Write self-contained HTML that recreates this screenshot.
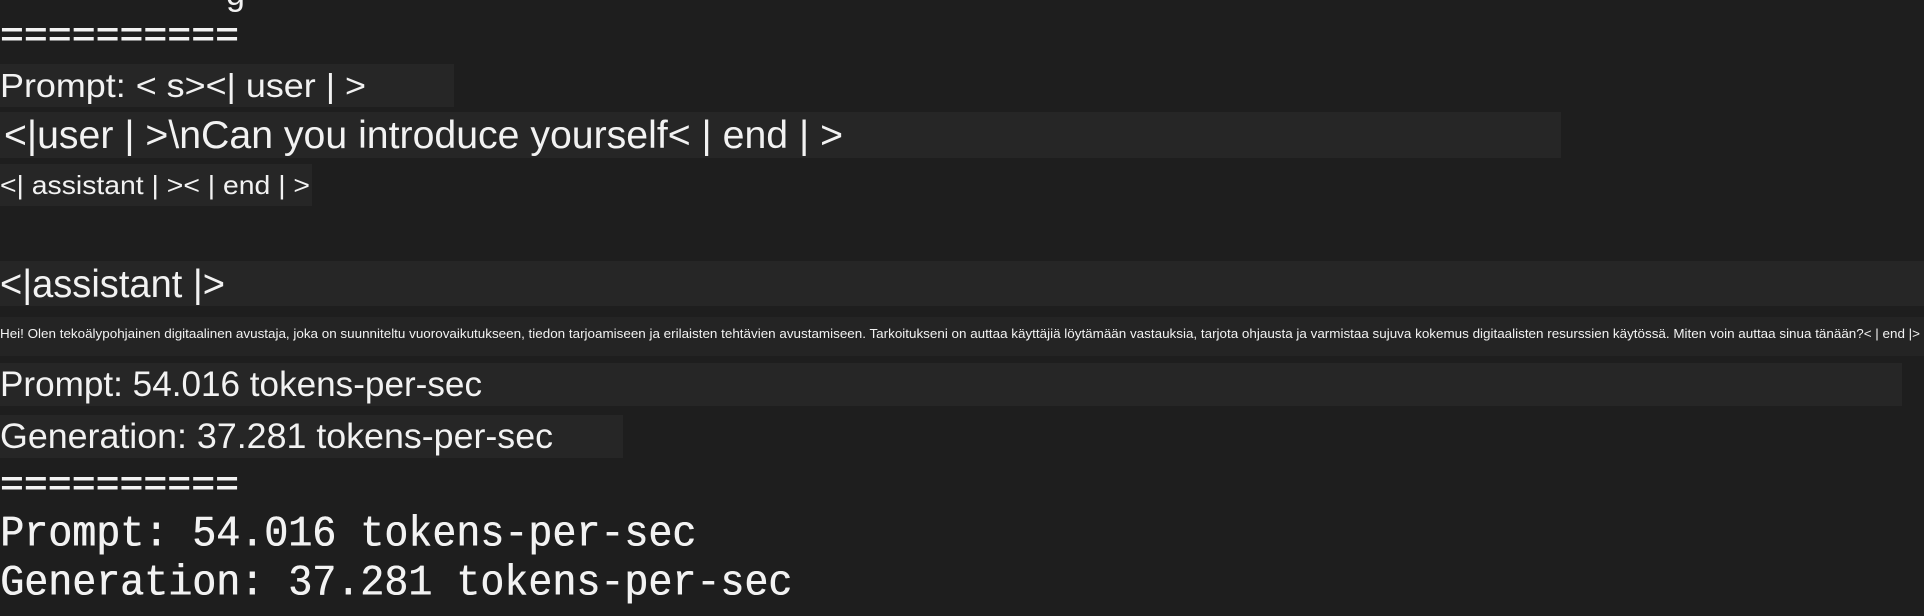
<!DOCTYPE html>
<html><head><meta charset="utf-8"><style>
html,body{margin:0;padding:0;background:#1e1e1e;width:1924px;height:616px;overflow:hidden}
body{position:relative;color:#f2f2f2;font-family:"Liberation Sans","DejaVu Sans",sans-serif}
.b{position:absolute;left:0;background:#262626}
.t{position:absolute;left:0;white-space:nowrap;transform-origin:0 50%;line-height:1}
.m{position:absolute;left:0;white-space:nowrap;font-family:"Liberation Mono","DejaVu Sans Mono",monospace;font-size:40px;line-height:1;text-shadow:0.6px 0 0 #f2f2f2;transform:scaleY(1.08);transform-origin:0 0}
.eq{font-family:"Liberation Mono",monospace;font-weight:bold}
</style></head><body>
<div class="t" style="top:-23px;left:226px;font-size:34px">g</div>
<div class="b" style="top:64px;width:454px;height:43px"></div>
<div class="b" style="top:112px;width:1561px;height:46px"></div>
<div class="b" style="top:164px;width:312px;height:42px"></div>
<div class="b" style="top:261px;width:1924px;height:45px"></div>
<div class="b" style="top:317px;width:1924px;height:39px;background:#242424"></div>
<div class="b" style="top:363px;width:1902px;height:43px"></div>
<div class="b" style="top:415px;width:623px;height:43px"></div>

<div class="t eq" id="e1" style="top:21px;font-size:32px">==========</div>
<div class="t" id="t1" style="top:69px;font-size:33px">Prompt: &lt; s&gt;&lt;| user | &gt;</div>
<div class="t" id="t2" style="top:116px;font-size:39px;left:4px">&lt;|user | &gt;\nCan you introduce yourself&lt; | end | &gt;</div>
<div class="t" id="t3" style="top:172px;font-size:26px">&lt;| assistant | &gt;&lt; | end | &gt;</div>
<div class="t" id="t4" style="top:265px;font-size:39px">&lt;|assistant |&gt;</div>
<div class="t" id="t5" style="top:327px;font-size:13px">Hei! Olen tekoälypohjainen digitaalinen avustaja, joka on suunniteltu vuorovaikutukseen, tiedon tarjoamiseen ja erilaisten tehtävien avustamiseen. Tarkoitukseni on auttaa käyttäjiä löytämään vastauksia, tarjota ohjausta ja varmistaa sujuva kokemus digitaalisten resurssien käytössä. Miten voin auttaa sinua tänään?&lt; | end |&gt;</div>
<div class="t" id="t6" style="top:367px;font-size:35px">Prompt: 54.016 tokens-per-sec</div>
<div class="t" id="t7" style="top:419px;font-size:35px">Generation: 37.281 tokens-per-sec</div>
<div class="t eq" id="e2" style="top:470px;font-size:32px">==========</div>
<div class="m" style="top:514px">Prompt: 54.016 tokens-per-sec</div>
<div class="m" style="top:563px">Generation: 37.281 tokens-per-sec</div>
<script>
var w={e1:239,t1:366,t2:839,t3:310,t4:225,t5:1920,t6:482,t7:553,e2:239};
for(var k in w){var el=document.getElementById(k);var r=el.getBoundingClientRect().width;if(r>0)el.style.transform='scaleX('+(w[k]/r)+')';}
</script>
</body></html>
